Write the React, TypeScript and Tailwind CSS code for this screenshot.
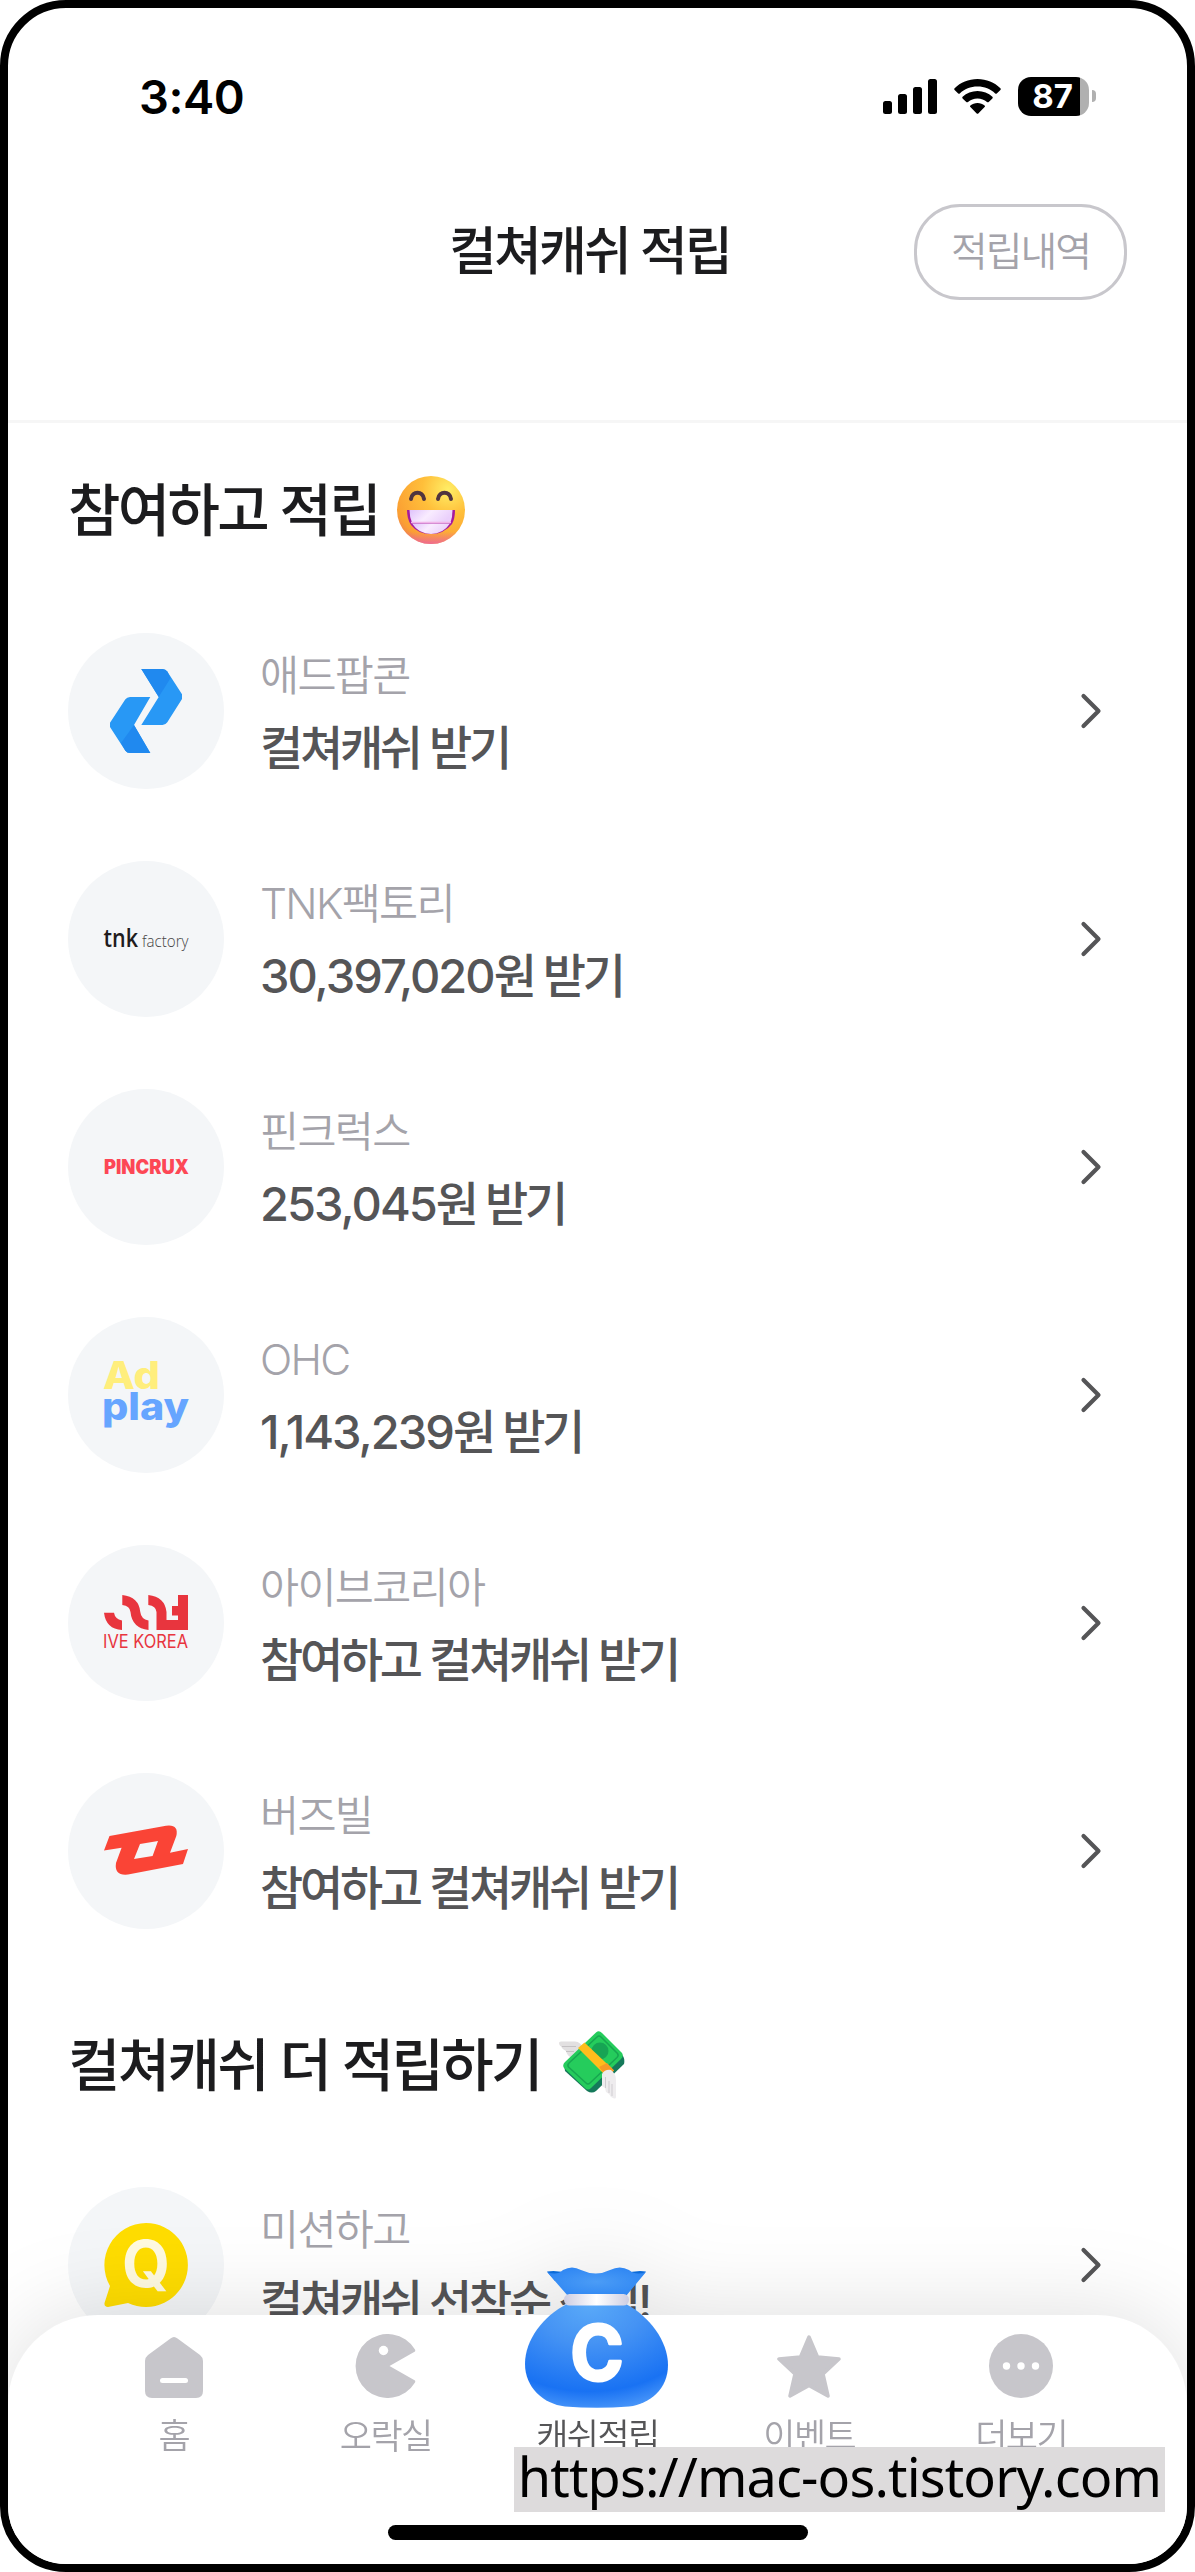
import React from 'react';

interface Offer {
  id: string;
  label: string;
  amount?: string;
  title: string;
  logo: React.ReactNode;
}

interface Tab {
  label: string;
  icon: React.ReactNode;
  active?: boolean;
}

const AdPopcornLogo = () => (
  <svg viewBox="0 0 156 156" className="h-full w-full">
    <path d="M73.3 36H94.5Q97.5 36 99.3 38.5L114 61.3V66L99.3 89.3Q97.5 92 94.5 92H73.3L90.7 64Z" fill="#2898f5" />
    <path d="M73.3 36H94.5Q97.5 36 99.3 38.5L102.5 45.3L90.7 64Z" fill="#2089ef" />
    <path d="M82.3 64H62Q59 64 57.2 66.5L42 89.7V94L57.2 117.5Q59 120 62 120H82.3L66 92Z" fill="#2898f5" />
    <path d="M82.3 120H62Q59 120 57.2 117.5L53 110L66 92Z" fill="#2089ef" />
  </svg>
);

const TnkLogo = () => (
  <svg viewBox="0 0 156 156" className="h-full w-full">
    <text x="35.5" y="86" fontFamily="Open Sans, sans-serif" fontSize="25" fontWeight="600" fill="#1f1c1d" textLength="34.5" lengthAdjust="spacingAndGlyphs">tnk</text>
    <text x="74" y="86" fontFamily="Open Sans, sans-serif" fontSize="17" fontWeight="300" fill="#444" textLength="46.5" lengthAdjust="spacingAndGlyphs">factory</text>
  </svg>
);

const PincruxLogo = () => (
  <svg viewBox="0 0 156 156" className="h-full w-full">
    <text x="36" y="84.5" fontFamily="Inter, sans-serif" fontSize="19.5" fontWeight="900" fill="#fd4755" textLength="85" lengthAdjust="spacingAndGlyphs">PINCRUX</text>
  </svg>
);

const AdPlayLogo = () => (
  <svg viewBox="0 0 156 156" className="h-full w-full">
    <text x="35" y="72" fontFamily="Inter, sans-serif" fontSize="38" fontWeight="800" fill="#ffee7c" textLength="57" lengthAdjust="spacingAndGlyphs">Ad</text>
    <text x="34" y="103" fontFamily="Inter, sans-serif" fontSize="38" fontWeight="800" fill="#66a5ff" textLength="87" lengthAdjust="spacingAndGlyphs">play</text>
  </svg>
);

const IveKoreaLogo = () => (
  <svg viewBox="0 0 156 156" className="h-full w-full">
    <g transform="translate(36 50)" fill="#e8353e">
      <path d="M0 17.700H10Q11 24 18 25.500V35Q2 34 0 17.700Z" />
      <path d="M18.300 0Q35 2 36.300 17Q37 24 44.500 25.500V35Q28 33 26.500 17Q26 11 18.300 10Z" />
      <path d="M44.300 0Q61 2 62.500 17V25H74V20.500H68V11H74V0H84V35H52.500V17Q52 11 44.300 10Z" />
    </g>
    <text x="35" y="103" fontFamily="Inter, sans-serif" fontSize="18.5" fontWeight="400" fill="#e8353e" textLength="85" lengthAdjust="spacingAndGlyphs">IVE KOREA</text>
  </svg>
);

const BuzzvilLogo = () => (
  <svg viewBox="0 0 156 156" className="h-full w-full">
    <path
      fillRule="evenodd"
      fill="#fa4436"
      d="M41.500 63L98 52.700Q111 51 108.300 63L102 79.700L120 76L115 91L60 101.500Q46 103 48 90L53.600 74.700L36 77.500ZM72 71L66 86L84.600 83L90 68Z"
    />
  </svg>
);

const QuizLogo = () => (
  <svg viewBox="0 0 156 156" className="h-full w-full">
    <path d="M78 36A42 42 0 1 1 60 116L40 120Q36 120 36.5 116L42 99A42 42 0 0 1 78 36Z" fill="#ffdd00" />
    <text x="78" y="99.5" textAnchor="middle" fontFamily="Inter, sans-serif" fontSize="64" fontWeight="700" fill="#fffae0" textLength="48" lengthAdjust="spacingAndGlyphs">Q</text>
  </svg>
);

const GrinEmoji = () => (
  <svg viewBox="0 0 68 68" className="h-[68px] w-[68px]">
    <defs>
      <radialGradient id="face" cx="0.75" cy="0.2" r="0.95">
        <stop offset="0" stopColor="#ffee66" />
        <stop offset="0.4" stopColor="#ffbf3a" />
        <stop offset="0.85" stopColor="#fb9f33" />
        <stop offset="1" stopColor="#ec7c55" />
      </radialGradient>
      <linearGradient id="chin" x1="0" y1="0" x2="0" y2="1">
        <stop offset="0.82" stopColor="#ec5fa8" stopOpacity="0" />
        <stop offset="1" stopColor="#ec5fa8" stopOpacity="0.8" />
      </linearGradient>
      <linearGradient id="teeth" x1="0" y1="0" x2="1" y2="0.3">
        <stop offset="0" stopColor="#dfc2fb" />
        <stop offset="0.5" stopColor="#f9ecff" />
        <stop offset="1" stopColor="#ead0fb" />
      </linearGradient>
    </defs>
    <circle cx="34" cy="34" r="34" fill="url(#face)" />
    <circle cx="34" cy="34" r="34" fill="url(#chin)" />
    <path d="M14 23C15 14.500 26 14.500 27 23M41 23C42 14.500 53 14.500 54 23" fill="none" stroke="#50343f" strokeWidth="4" strokeLinecap="round" />
    <path d="M10 34H58Q58 43 55 48Q47 58 34 58Q21 58 14 49Q10 43 10 34Z" fill="#a51a9e" />
    <path d="M12.500 34H55.500Q55.500 41 53.500 46.500H15Q12.500 41 12.500 34Z" fill="url(#teeth)" />
    <path d="M15 47.500H53Q46 58 34 58Q22 58 15 47.500Z" fill="url(#teeth)" />
    <path d="M14 46.500H54" stroke="#f0b5e8" strokeWidth="1.5" />
  </svg>
);

const FlyingMoneyEmoji = () => (
  <svg viewBox="0 0 66 68" className="h-[68px] w-[66px]">
    <path d="M0 12Q0 10.500 2 10.500H16Q22 11 24 17L13 27Q8 25 7 20Q3 18 2 15.500Q0 14 0 12Z" fill="#e2e0e1" />
    <path d="M3 15.500H17M7 20.500H15" stroke="#c5c2c4" strokeWidth="1.2" />
    <path d="M40 2L64 25Q66 28 65 33L37 60Q33 63 28 60L6 40L5 33Z" fill="#15795a" />
    <path d="M37 1.500Q40 -1 43 2L63 22Q65 25 62 28L32 57Q29 60 26 57L5 37Q3 34 6 31Z" fill="#25cc5c" />
    <path d="M38 6Q40 4 42 6L58.500 22.500Q60 24.500 58 26.500L31 52Q29 54 27 52L9.500 36Q8 34 10 32Z" fill="none" stroke="#17a650" strokeWidth="1.5" />
    <circle cx="41" cy="20" r="8.5" fill="#17a454" />
    <path d="M19 17L25.500 11.500L55 39.500L48 46Z" fill="#ffbd1c" />
    <path d="M40 36L48 32L55 39.500L48 46Z" fill="#f89a25" />
    <path d="M43 43Q46 38 52 39Q57 43 57 49V66Q57 68 55 67.500L52 66L50 63L47 61L46 57L43 55Z" fill="#eeecee" />
    <path d="M46.500 57V46M50 62V50M53 65V53" stroke="#cfccd0" strokeWidth="1" />
  </svg>
);

const SignalIcon = () => (
  <svg viewBox="0 0 54 35" className="h-[35px] w-[54px]">
    <rect x="0" y="22" width="9" height="13" rx="2.5" />
    <rect x="15" y="15" width="9" height="20" rx="2.5" />
    <rect x="30" y="8" width="9" height="27" rx="2.5" />
    <rect x="45" y="0" width="9" height="35" rx="2.5" />
  </svg>
);

const WifiIcon = () => (
  <svg viewBox="0 0 47 35" className="h-[35px] w-[47px]">
    <path d="M23.500 0C32.500 0 40.500 3.500 46.400 9.200Q47.200 10 46.400 10.900L42.800 14.500Q42 15.200 41.200 14.500C36.500 10.200 30.500 7.600 23.500 7.600S10.500 10.200 5.800 14.500Q5 15.200 4.200 14.500L.6 10.900Q-.2 10 .6 9.200C6.500 3.500 14.500 0 23.500 0Z" />
    <path d="M23.500 12C29.200 12 34.400 14.200 38.400 17.700Q39.200 18.500 38.400 19.400L34.700 23Q33.900 23.700 33 23C30.400 20.900 27.200 19.600 23.500 19.600S16.600 20.900 14 23Q13.100 23.700 12.300 23L8.600 19.400Q7.800 18.500 8.600 17.700C12.600 14.200 17.800 12 23.500 12Z" />
    <path d="M23.500 24C26.300 24 28.700 24.900 30.600 26.400Q31.400 27.200 30.600 28L24.300 34.400Q23.500 35.200 22.700 34.400L16.400 28Q15.600 27.200 16.400 26.400C18.300 24.900 20.700 24 23.500 24Z" />
  </svg>
);

const Chevron = () => (
  <svg viewBox="0 0 24 38" className="h-[38px] w-6" fill="none" stroke="#555557" strokeWidth="4.2" strokeLinecap="round" strokeLinejoin="round">
    <path d="M4.500 4L19.500 19L4.500 34" />
  </svg>
);

const MoneyBag = () => (
  <svg viewBox="0 0 144 141" className="h-[141px] w-36">
    <defs>
      <radialGradient id="bag" cx="0.45" cy="0" r="1.08">
        <stop offset="0" stopColor="#5aaaf8" />
        <stop offset="0.35" stopColor="#4593f4" />
        <stop offset="0.78" stopColor="#1972f3" />
        <stop offset="1" stopColor="#559ffa" />
      </radialGradient>
      <radialGradient id="cloth" cx="0.5" cy="0.5" r="0.6">
        <stop offset="0" stopColor="#4b9cf6" />
        <stop offset="1" stopColor="#2d85f3" />
      </radialGradient>
      <linearGradient id="band" x1="0" y1="0" x2="1" y2="0">
        <stop offset="0" stopColor="#cdcde2" />
        <stop offset="0.5" stopColor="#ffffff" />
        <stop offset="1" stopColor="#cdcde2" />
      </linearGradient>
    </defs>
    <path d="M22 4.500Q34 3 44 7L100 7Q110 3 121 4.500L112 14H30Z" fill="#0b6bd9" />
    <path d="M22 5Q32 9 38 3Q47 -2 56 3Q71 10 85 3Q95 -2 104 3Q111 9 121 5L101 29H43Z" fill="url(#cloth)" />
    <path d="M42 37H101C124 49 143 74 143 98C143 122 125 137 104 139.500Q72 142 40 139.500C18 137 0 120 0 97C0 73 18 49 42 37Z" fill="url(#bag)" />
    <rect x="39" y="27" width="65" height="11.5" rx="5.5" fill="url(#band)" />
    <text x="72" y="113" textAnchor="middle" fontFamily="Inter, sans-serif" fontSize="75" fontWeight="700" fill="#fff" stroke="#fff" strokeWidth="3" strokeLinejoin="round" textLength="53" lengthAdjust="spacingAndGlyphs">C</text>
  </svg>
);

const HomeIcon = () => (
  <svg viewBox="0 0 64 64" className="h-16 w-16">
    <path d="M28.500 4.500Q32 1.500 35.500 4.500L58 21Q61 23.500 61 27V57Q61 64 54 64H10Q3 64 3 57V27Q3 23.500 6 21Z" fill="#c7c6cb" />
    <rect x="18" y="44" width="28" height="5" rx="2.5" fill="#fff" />
  </svg>
);

const ArcadeIcon = () => (
  <svg viewBox="0 0 64 64" className="h-16 w-16">
    <path d="M35.500 32L61 17.500Q61.500 16.500 61 15.500A32 32 0 1 0 61 48.500Q61.500 47.500 61 46.500Z" fill="#c7c6cb" />
    <circle cx="29.5" cy="16.5" r="4.7" fill="#fff" />
  </svg>
);

const StarIcon = () => (
  <svg viewBox="0 0 64 64" className="h-16 w-16">
    <path d="M32 3L40.500 23L62 25L46 40L51 62L32 51.500L13 62L18 40L2 25L23.500 23Z" fill="#c7c6cb" stroke="#c7c6cb" strokeWidth="3.5" strokeLinejoin="round" />
  </svg>
);

const MoreIcon = () => (
  <svg viewBox="0 0 64 64" className="h-16 w-16">
    <circle cx="32" cy="32" r="32" fill="#c7c6cb" />
    <circle cx="17.5" cy="32" r="3.7" fill="#fff" />
    <circle cx="32" cy="32" r="3.7" fill="#fff" />
    <circle cx="46.5" cy="32" r="3.7" fill="#fff" />
  </svg>
);

const OFFERS: Offer[] = [
  { id: 'adpopcorn', label: '애드팝콘', title: '컬쳐캐쉬 받기', logo: <AdPopcornLogo /> },
  { id: 'tnk', label: 'TNK팩토리', amount: '30,397,020', title: '원 받기', logo: <TnkLogo /> },
  { id: 'pincrux', label: '핀크럭스', amount: '253,045', title: '원 받기', logo: <PincruxLogo /> },
  { id: 'ohc', label: 'OHC', amount: '1,143,239', title: '원 받기', logo: <AdPlayLogo /> },
  { id: 'ive', label: '아이브코리아', title: '참여하고 컬쳐캐쉬 받기', logo: <IveKoreaLogo /> },
  { id: 'buzzvil', label: '버즈빌', title: '참여하고 컬쳐캐쉬 받기', logo: <BuzzvilLogo /> },
];

const MORE_OFFERS: Offer[] = [
  { id: 'quiz', label: '미션하고', title: '컬쳐캐쉬 선착순 적립!', logo: <QuizLogo /> },
];

const TABS: Tab[] = [
  { label: '홈', icon: <HomeIcon /> },
  { label: '오락실', icon: <ArcadeIcon /> },
  { label: '캐쉬적립', icon: <MoneyBag />, active: true },
  { label: '이벤트', icon: <StarIcon /> },
  { label: '더보기', icon: <MoreIcon /> },
];

const StatusBar = () => (
  <div className="flex h-[176px] items-center pl-[131px] pr-[91px]">
    <span className="text-[47px] font-semibold leading-none tracking-[-0.01em] text-black">3:40</span>
    <div className="ml-auto flex items-center">
      <SignalIcon />
      <div className="ml-[17px]"><WifiIcon /></div>
      <div className="ml-[17px] flex h-[39px] w-[71px] items-center justify-center overflow-hidden rounded-[13px] bg-[linear-gradient(90deg,#000_62px,#b0b0b0_62px)] text-[33px] font-bold leading-none text-white">
        <span className="-ml-0.5">87</span>
      </div>
      <div className="ml-[3px] h-3 w-1 rounded-r-full bg-[#b0b0b0]" />
    </div>
  </div>
);

const OfferRow = ({ offer }: { offer: Offer }) => (
  <li className="flex h-[156px] items-center pl-[60px] pr-[84px]">
    <div className="h-[156px] w-[156px] shrink-0 rounded-full bg-[#f4f6f8]">{offer.logo}</div>
    <div className="ml-9 flex-1 pt-[3px]">
      <p className="text-[42.5px] font-[350] leading-[60px] tracking-[-0.04em] text-[#a4a3aa]">{offer.label}</p>
      <p className="mt-2.5 text-[47px] font-medium leading-[64px] tracking-[-0.07em] text-[#555557]">
        {offer.amount && <span className="tracking-[-0.042em]">{offer.amount}</span>}
        {offer.title}
      </p>
    </div>
    <Chevron />
  </li>
);

const SectionTitle = ({ text, children }: { text: string; children: React.ReactNode }) => (
  <h2 className="flex h-[68px] items-center pl-[60px] text-[57px] font-medium leading-none tracking-[-0.047em] text-[#1c1c1e]">
    <span className="mr-[18px]">{text}</span>
    {children}
  </h2>
);

export default function App() {
  return (
    <div className="relative h-[2572px] w-[1195px] overflow-hidden rounded-[66px] border-8 border-black bg-white font-['Inter','Noto_Sans_CJK_KR',sans-serif]">
      <StatusBar />

      <header className="grid h-[239px] grid-cols-[1fr_auto_1fr] items-center border-b-[3px] border-[#f6f6f6] pb-[101px] pl-[44px] pr-[60px] pt-[1px]">
        <h1 className="col-start-2 whitespace-nowrap text-[52px] font-medium leading-none tracking-[-0.055em] text-[#1c1c1e]">컬쳐캐쉬 적립</h1>
        <button className="flex h-24 w-[213px] items-center justify-center justify-self-end rounded-[46px] border-[3px] border-[#c8c7cc] text-[40px] font-[350] tracking-[-0.05em] text-[#a4a3aa]">
          적립내역
        </button>
      </header>

      <main>
        <div className="pt-[53px]">
          <SectionTitle text="참여하고 적립"><GrinEmoji /></SectionTitle>
        </div>
        <ul className="mt-[89px] flex flex-col gap-[72px]">
          {OFFERS.map(offer => <OfferRow key={offer.id} offer={offer} />)}
        </ul>

        <div className="pt-[102px]">
          <SectionTitle text="컬쳐캐쉬 더 적립하기"><FlyingMoneyEmoji /></SectionTitle>
        </div>
        <ul className="mt-[88px] flex flex-col gap-[72px]">
          {MORE_OFFERS.map(offer => <OfferRow key={offer.id} offer={offer} />)}
        </ul>
      </main>

      {/* Bottom tab bar, floats over the list */}
      <nav className="absolute inset-x-0 bottom-0 flex h-[249px] flex-col items-center rounded-t-[90px] bg-white drop-shadow-[0_0_44px_rgba(0,0,0,0.13)]">
        <div className="grid w-full grid-cols-5 px-[60px] pt-[19px]">
          {TABS.map(tab => (
            <div key={tab.label} className="flex flex-col items-center">
              <div className="flex h-16 items-end justify-center">
                <div className={tab.active ? '-mb-2.5' : ''}>{tab.icon}</div>
              </div>
              <span className={`mt-[18px] text-[35px] font-[350] leading-[40px] tracking-[-0.045em] ${tab.active ? 'text-[#555557]' : 'text-[#a4a3aa]'}`}>
                {tab.label}
              </span>
            </div>
          ))}
        </div>
        <div className="mb-6 mt-auto h-[15px] w-[420px] rounded-full bg-black" />
      </nav>

      <div className="absolute bottom-[52px] right-[22px] flex h-[65px] w-[651px] items-center justify-center whitespace-nowrap bg-[#dddbdc] pb-[7px] font-['Noto_Sans',sans-serif] text-[54px] leading-none tracking-[-0.016em] text-black">
        https://mac-os.tistory.com
      </div>
    </div>
  );
}
